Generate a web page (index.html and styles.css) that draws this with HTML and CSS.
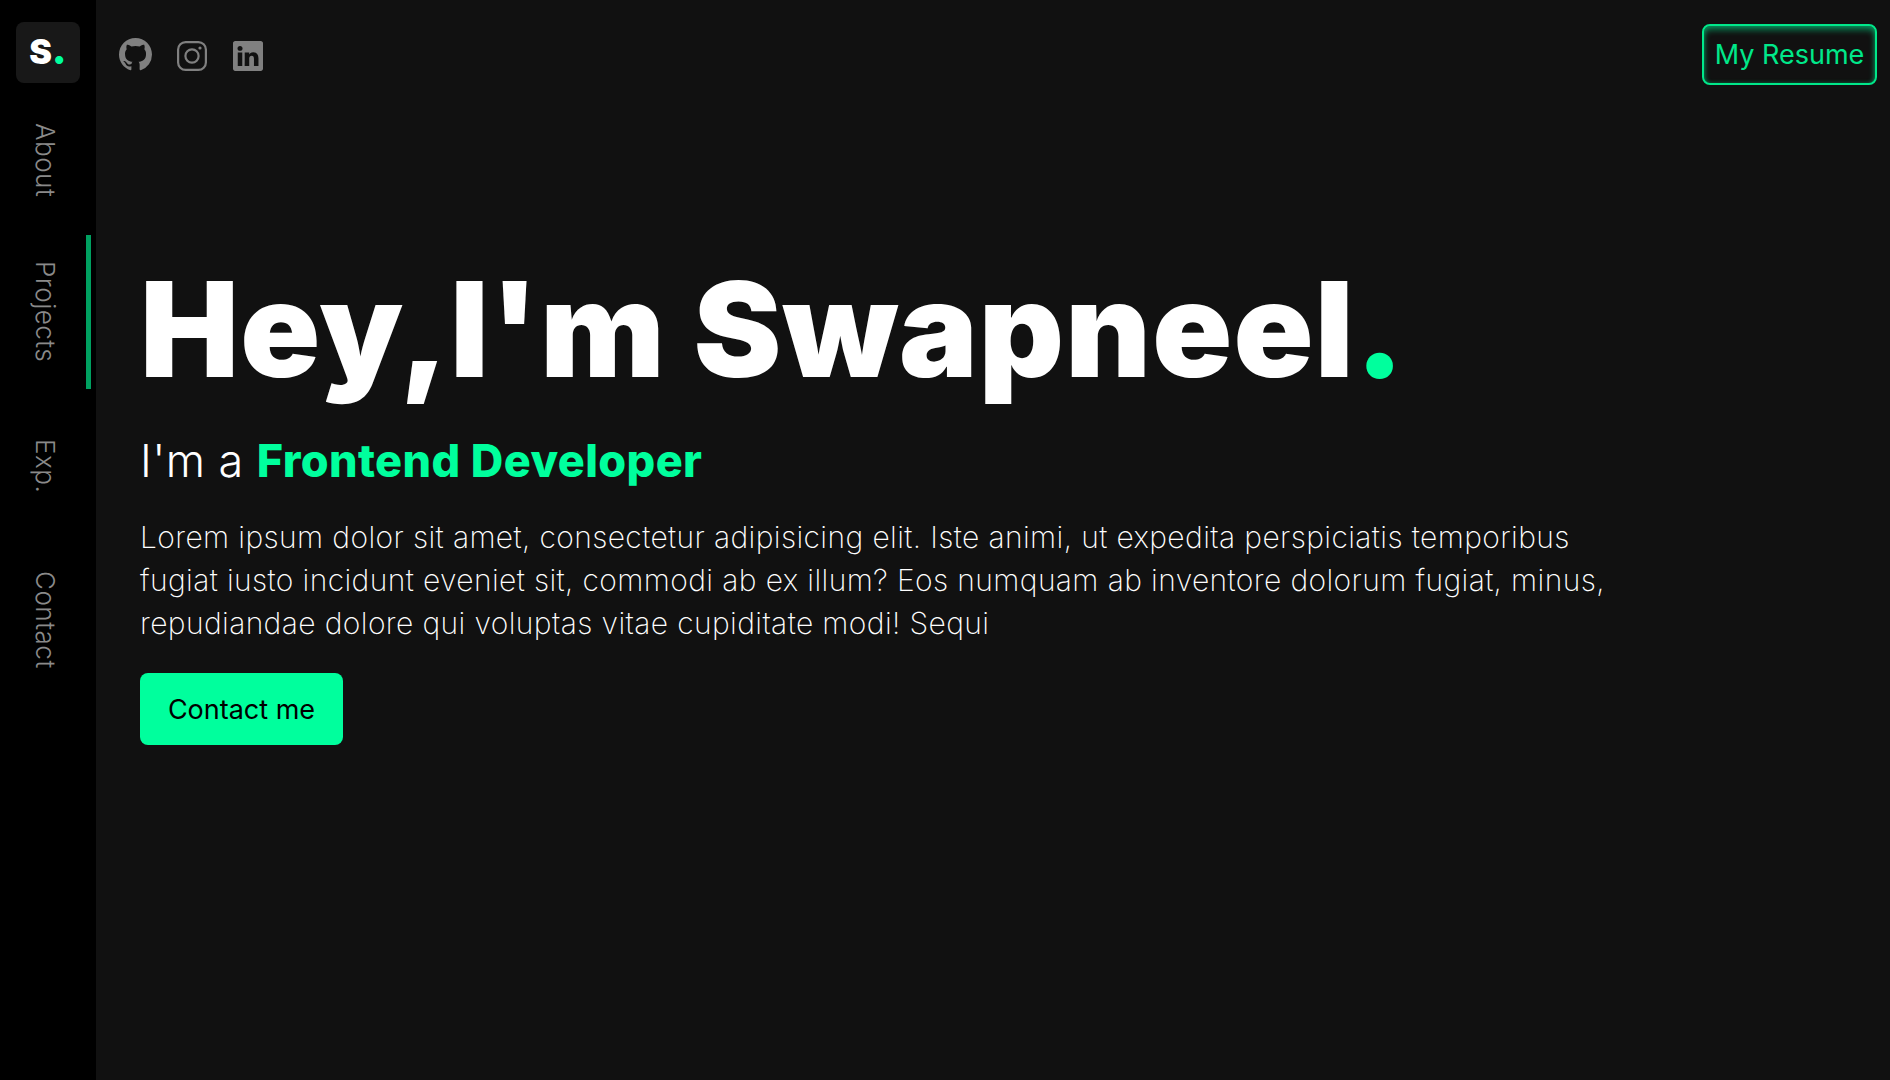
FILE: index.html
```html
<!doctype html>
<html>
<head>
<meta charset="utf-8">
<meta name="viewport" content="width=device-width, initial-scale=1.0">
<link rel="stylesheet" href="styles.css">
<title>Swapneel</title>
</head>
<body>
<div class="page">
	<aside class="sidebar">
		<a class="logo" href="#">S<span class="accent logo-dot">.</span></a>
		<nav class="nav">
			<a class="nav-item" href="#about">About</a>
			<a class="nav-item active" href="#projects">Projects</a>
			<a class="nav-item" href="#exp">Exp.</a>
			<a class="nav-item" href="#contact">Contact</a>
		</nav>
	</aside>
	<main class="main">
		<header class="topbar">
			<div class="socials">
				<a href="#" class="social social-github">
					<svg viewBox="0 0 16 16" width="33" height="33" fill="currentColor"><path d="M8 0C3.58 0 0 3.58 0 8c0 3.54 2.29 6.53 5.47 7.59.4.07.55-.17.55-.38 0-.19-.01-.82-.01-1.49-2.01.37-2.53-.49-2.69-.94-.09-.23-.48-.94-.82-1.13-.28-.15-.68-.52-.01-.53.63-.01 1.08.58 1.23.82.72 1.21 1.87.87 2.33.66.07-.52.28-.87.51-1.07-1.78-.2-3.64-.89-3.64-3.95 0-.87.31-1.59.82-2.15-.08-.2-.36-1.02.08-2.12 0 0 .67-.21 2.2.82.64-.18 1.32-.27 2-.27.68 0 1.36.09 2 .27 1.53-1.04 2.2-.82 2.2-.82.44 1.1.16 1.92.08 2.12.51.56.82 1.27.82 2.15 0 3.07-1.87 3.75-3.65 3.95.29.25.54.73.54 1.48 0 1.07-.01 1.93-.01 2.2 0 .21.15.46.55.38A8.012 8.012 0 0 0 16 8c0-4.42-3.58-8-8-8z"/></svg>
				</a>
				<a href="#" class="social">
					<svg viewBox="0 0 30 30" width="30" height="30" fill="none" stroke="currentColor" stroke-width="2.2"><rect x="1.1" y="1.1" width="27.8" height="27.8" rx="7.5"/><circle cx="15" cy="15" r="6.6"/><circle cx="23" cy="7" r="1.6" fill="currentColor" stroke="none"/></svg>
				</a>
				<a href="#" class="social social-last">
					<svg viewBox="0 0 16 16" width="30" height="30" fill="currentColor"><path d="M0 1.146C0 .513.526 0 1.175 0h13.65C15.474 0 16 .513 16 1.146v13.708c0 .633-.526 1.146-1.175 1.146H1.175C.526 16 0 15.487 0 14.854V1.146zm4.943 12.248V6.169H2.542v7.225h2.401zm-1.2-8.212c.837 0 1.358-.554 1.358-1.248-.015-.709-.52-1.248-1.342-1.248-.822 0-1.359.54-1.359 1.248 0 .694.521 1.248 1.327 1.248h.016zm4.908 8.212V9.359c0-.216.016-.432.08-.586.173-.431.568-.878 1.232-.878.869 0 1.216.662 1.216 1.634v3.865h2.401V9.25c0-2.22-1.184-3.252-2.764-3.252-1.274 0-1.845.7-2.165 1.193v.025h-.016a5.54 5.54 0 0 1 .016-.025V6.169h-2.4c.03.678 0 7.225 0 7.225h2.4z"/></svg>
				</a>
			</div>
			<a class="resume" href="#">My Resume</a>
		</header>
		<section class="hero">
			<h1 class="title">Hey,I'm Swapneel<span class="accent">.</span></h1>
			<h2 class="subtitle">I'm a <b class="accent">Frontend Developer</b></h2>
			<p class="intro">Lorem ipsum dolor sit amet, consectetur adipisicing elit. Iste animi, ut expedita perspiciatis temporibus fugiat iusto incidunt eveniet sit, commodi ab ex illum? Eos numquam ab inventore dolorum fugiat, minus, repudiandae dolore qui voluptas vitae cupiditate modi! Sequi</p>
			<a class="contact" href="#">Contact me</a>
		</section>
	</main>
</div>
</body>
</html>
```

FILE: styles.css
```css
* {
    box-sizing: border-box;
}
html,
body {
    margin: 0;
    padding: 0;
}
body {
    font-family: Inter, "Liberation Sans", sans-serif;
    color: white;
    background-color: #111;
    overflow: hidden;
}
a {
    color: inherit;
    text-decoration: none;
}
.accent {
    color: #00ff9d;
}
.page {
    display: flex;
    height: 1080px;
}

/* left rail */
.sidebar {
    width: 96px;
    flex-shrink: 0;
    background-color: #000;
    padding-top: 22px;
}
.logo {
    display: flex;
    align-items: baseline;
    justify-content: center;
    width: 64px;
    height: 61px;
    margin-left: 16px;
    margin-bottom: -2px;
    border-radius: 8px;
    background-color: #181818;
    font-size: 34px;
    font-weight: 900;
    line-height: 59px;
}
.logo-dot {
    font-size: 40px;
    line-height: 1;
}
.nav {
    display: flex;
    flex-direction: column;
}
.nav-item {
    display: flex;
    align-items: center;
    justify-content: center;
    width: 91px;
    height: 154px;
    padding-left: 5px;
    border-right: 5px solid transparent;
    writing-mode: vertical-rl;
    font-size: 26px;
    font-weight: 300;
    letter-spacing: 0.5px;
    color: #8a8a8a;
}
.nav-item:first-child {
    padding-top: 4px;
}
.nav-item.active {
    border-right-color: #00a060;
}

/* top row */
.main {
    flex: 1;
    min-width: 0;
}
.topbar {
    display: flex;
    align-items: center;
    justify-content: space-between;
    padding: 24px 13px 0 23px;
}
.socials {
    display: flex;
    align-items: flex-end;
    gap: 25px;
    color: #808080;
}
.social {
    display: flex;
}
.social-last {
    margin-left: 1px;
}
.resume {
    display: flex;
    align-items: center;
    justify-content: center;
    width: 175px;
    height: 61px;
    border: 2px solid #00e88a;
    border-radius: 8px;
    box-shadow: inset 0 4px 6px rgba(0, 255, 157, 0.45), inset 0 0 4px rgba(0, 255, 157, 0.3);
    color: #00e88a;
    font-size: 27px;
}

/* hero */
.hero {
    padding: 165px 0 0 44px;
}
.title {
    margin: 0;
    font-size: 132px;
    font-weight: 900;
    line-height: 1.2;
    letter-spacing: 1.2px;
    white-space: nowrap;
}
.subtitle {
    margin: 23px 0 0;
    font-size: 45px;
    font-weight: 300;
    line-height: 60px;
    letter-spacing: 0.4px;
}
.subtitle b {
    font-weight: 800;
}
.intro {
    width: 1490px;
    margin: 25px 0 0;
    font-size: 30px;
    font-weight: 250;
    line-height: 43px;
    letter-spacing: 0.38px;
}
.contact {
    display: inline-flex;
    align-items: center;
    justify-content: center;
    width: 203px;
    height: 72px;
    margin-top: 28px;
    border-radius: 8px;
    background-color: #00ff9d;
    color: #000;
    font-size: 27px;
}
```
